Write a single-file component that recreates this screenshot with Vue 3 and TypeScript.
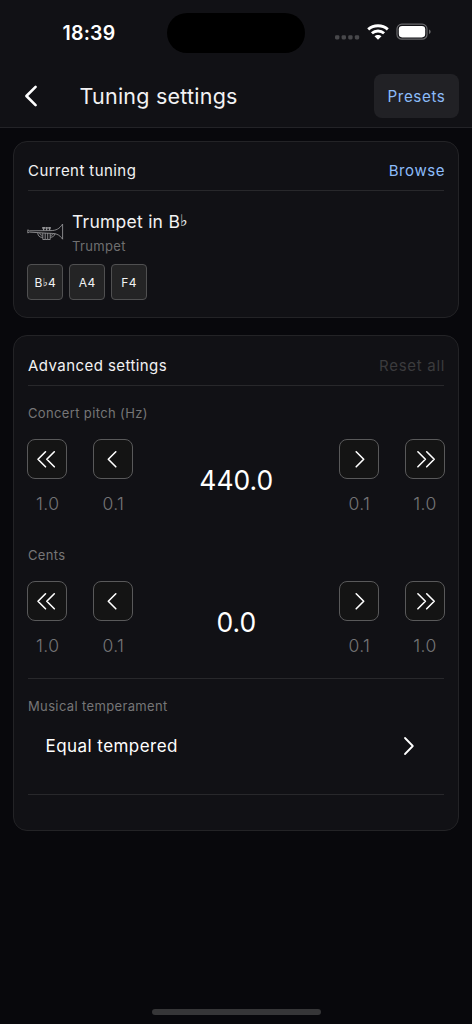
<script setup lang="ts">
interface Stepper {
  id: string
  label: string
  value: string
}

const notes: string[] = ['B♭4', 'A4', 'F4']

const steppers: Stepper[] = [
  { id: 'pitch', label: 'Concert pitch (Hz)', value: '440.0' },
  { id: 'cents', label: 'Cents', value: '0.0' },
]

const down = [
  { step: '1.0', path: 'M18.5 12.8 L11 20.3 L18.5 27.8 M27.3 12.8 L19.8 20.3 L27.3 27.8' },
  { step: '0.1', path: 'M22.8 12.8 L15.3 20.3 L22.8 27.8' },
]

const up = [
  { step: '0.1', path: 'M17.2 12.8 L24.7 20.3 L17.2 27.8' },
  { step: '1.0', path: 'M12.9 12.8 L20.4 20.3 L12.9 27.8 M21.7 12.8 L29.2 20.3 L21.7 27.8' },
]
</script>

<template>
  <div class="screen">
    <header class="top">
      <div class="status">
        <span class="clock">18:39</span>
        <span class="island"></span>
        <span class="indicators">
          <svg class="cell" width="26" height="20" viewBox="0 0 26 20">
            <g fill="#48484b">
              <rect x="1" y="12.2" width="4.4" height="4.2" rx="1.3" />
              <rect x="7.6" y="12.2" width="4.4" height="4.2" rx="1.3" />
              <rect x="14.2" y="12.2" width="4.4" height="4.2" rx="1.3" />
              <rect x="20.8" y="12.2" width="4.4" height="4.2" rx="1.3" />
            </g>
          </svg>
          <svg class="wifi" width="22" height="16" viewBox="0 0 22 16">
            <g fill="none" stroke="#fff" stroke-width="2.9">
              <path d="M1.2 5.4 C6.6 0.6 15.4 0.6 20.8 5.4" />
              <path d="M4.9 9.3 C8.3 6.2 13.7 6.2 17.1 9.3" />
            </g>
            <path d="M11 15.8 L7.5 12.2 C9.4 10.5 12.6 10.5 14.5 12.2 Z" fill="#fff" />
          </svg>
          <svg class="battery" width="36" height="18" viewBox="0 0 36 18">
            <rect x="1" y="1.2" width="30" height="15" rx="4.8" fill="none" stroke="#69696c" stroke-width="1.2" />
            <rect x="2.8" y="3" width="26.4" height="11.4" rx="3.3" fill="#fff" />
            <path d="M33 6.5 C35.2 7.3 35.2 10.1 33 10.9 Z" fill="#69696c" />
          </svg>
        </span>
      </div>
      <div class="bar">
        <svg class="back" width="20" height="28" viewBox="0 0 20 28">
          <path d="M15.6 4.8 L6.4 14 L15.6 23.2" fill="none" stroke="#fff" stroke-width="2.6" stroke-linecap="round" stroke-linejoin="round" />
        </svg>
        <h1 class="title">Tuning settings</h1>
        <button class="presets">Presets</button>
      </div>
    </header>

    <main class="content">
      <section class="card current">
        <div class="card-head">
          <h2 class="heading">Current tuning</h2>
          <a class="link">Browse</a>
        </div>
        <div class="instrument">
          <svg class="trumpet" width="37" height="18" viewBox="0 0 37 18">
            <g fill="none" stroke="#929294" stroke-width="0.9" stroke-linejoin="round">
              <path d="M0.8 6.8 V10 L2.4 9.1 L20 10.2 C29 10.3 32 11 35.6 16.2 V1 C32.4 6 29 7.5 24 7.6 L2.4 7.8 Z" />
              <path d="M10.7 9.8 C11 13 12.6 14.3 15 14.3 H15.8 M23.2 14.3 C26 14.3 27.5 13 28 10.5" />
              <path d="M12.7 10 C13 11.6 13.8 12.3 15.4 12.3 M23.4 12.3 C25.2 12.3 26 11.6 26.2 10.4" />
              <path d="M15.8 10 V16.5 H18.2 V10 M18.2 16.5 H20.7 V10 M20.7 16.5 H23.2 V10" />
              <path d="M15.2 4.8 H18 M18.4 4.8 H20.8 M21.2 4.8 H23.8" stroke-width="1.7" />
              <path d="M16.6 5 V7.5 M19.6 5 V7.5 M22.6 5 V7.5" stroke-width="1.3" />
            </g>
          </svg>
          <div class="names">
            <div class="name">Trumpet in B<span class="flat">♭</span></div>
            <div class="kind">Trumpet</div>
          </div>
        </div>
        <div class="chips">
          <span v-for="n in notes" :key="n" class="chip">
            <span v-if="n.includes('♭')">{{ n[0] }}<span class="flat">♭</span>{{ n[2] }}</span>
            <span v-else>{{ n }}</span>
          </span>
        </div>
      </section>

      <section class="card advanced">
        <div class="card-head">
          <h2 class="heading">Advanced settings</h2>
          <a class="link disabled">Reset all</a>
        </div>
        <div v-for="s in steppers" :key="s.id" class="stepper">
          <div class="label">{{ s.label }}</div>
          <div class="controls">
            <div class="side">
              <div v-for="b in down" :key="b.step" class="unit">
                <button class="step">
                  <svg width="40" height="40" viewBox="0 0 40 40"><path :d="b.path" /></svg>
                </button>
                <span class="amount">{{ b.step }}</span>
              </div>
            </div>
            <div class="value">{{ s.value }}</div>
            <div class="side">
              <div v-for="b in up" :key="b.step" class="unit">
                <button class="step">
                  <svg width="40" height="40" viewBox="0 0 40 40"><path :d="b.path" /></svg>
                </button>
                <span class="amount">{{ b.step }}</span>
              </div>
            </div>
          </div>
        </div>
        <div class="temperament">
          <div class="label">Musical temperament</div>
          <div class="option">
            <span>Equal tempered</span>
            <svg width="14" height="22" viewBox="0 0 14 22">
              <path d="M3 3 L10.8 11 L3 19" fill="none" stroke="#fff" stroke-width="1.8" stroke-linecap="round" stroke-linejoin="round" />
            </svg>
          </div>
        </div>
      </section>
    </main>
    <div class="home"><span></span></div>
  </div>
</template>

<style>
body {
  margin: 0;
  background: #08080c;
}
</style>

<style scoped>
* {
  box-sizing: border-box;
}
.screen {
  width: 472px;
  height: 1024px;
  display: flex;
  flex-direction: column;
  overflow: hidden;
  background: #08080c;
  color: #f2f2f3;
  font-family: Inter, 'Liberation Sans', sans-serif;
}
h1, h2 {
  margin: 0;
}
button {
  padding: 0;
  font-family: inherit;
}
.top {
  height: 128px;
  background: #111115;
  border-bottom: 1px solid #232327;
}
.status {
  height: 65px;
  display: grid;
  grid-template-columns: 167px 138px 167px;
  align-items: center;
}
.clock {
  padding-left: 62.5px;
  font-size: 19.5px;
  font-weight: 600;
  line-height: 24px;
  color: #fff;
  letter-spacing: 0.2px;
}
.island {
  height: 40px;
  border-radius: 20px;
  background: #000;
}
.indicators {
  display: flex;
  align-items: center;
  padding-left: 29px;
}
.cell {
  margin-top: 1px;
}
.wifi {
  margin-left: 7px;
  margin-top: -1px;
}
.battery {
  margin-left: 7px;
  margin-top: -1px;
}
.bar {
  height: 62px;
  display: flex;
  align-items: center;
  padding: 0 13.5px 0 20px;
}
.title {
  flex: 1;
  margin-left: 39.5px;
  font-size: 21.5px;
  font-weight: 400;
  line-height: 28px;
  letter-spacing: 0.23px;
  white-space: nowrap;
}
.presets {
  width: 85px;
  height: 44px;
  border: 0;
  border-radius: 8px;
  background: #212125;
  color: #8cbcfa;
  font-size: 15.2px;
  letter-spacing: 0.6px;
  padding-left: 1px;
}
.content {
  flex: 1;
  display: flex;
  flex-direction: column;
  gap: 18px;
  padding: 13px 13px 0;
}
.card {
  border: 1px solid #232326;
  border-radius: 14px;
  background: #111115;
  padding: 0 14px 0 13.5px;
}
.current {
  height: 177px;
}
.advanced {
  height: 496px;
  margin-top: -1px;
}
.card-head {
  height: 49px;
  display: flex;
  align-items: center;
  justify-content: space-between;
  padding-top: 9px;
  border-bottom: 1px solid #28282b;
}
.advanced .card-head {
  height: 50px;
  padding-top: 10px;
}
.heading,
.link {
  font-size: 15px;
  font-weight: 400;
  line-height: 20px;
  letter-spacing: 0.43px;
}
.heading {
  padding-left: 0.6px;
}
.link {
  margin-right: -1.2px;
  color: #8cbcfa;
  letter-spacing: 0.6px;
}
.link.disabled {
  color: #3b3b3d;
  letter-spacing: 0.72px;
}
.instrument {
  display: flex;
  height: 66px;
  padding-top: 19px;
}
.trumpet {
  margin-top: 13px;
  margin-left: -0.8px;
}
.names {
  margin-left: 8.3px;
}
.name {
  font-size: 17.5px;
  line-height: 24px;
  letter-spacing: 0.25px;
}
.kind {
  font-size: 13px;
  line-height: 18px;
  margin-top: 3px;
  letter-spacing: 0.35px;
  color: #6f6f70;
}
.flat {
  font-family: 'DejaVu Sans', sans-serif;
  font-size: 0.92em;
  font-weight: 700;
  line-height: 0;
  letter-spacing: 0;
  vertical-align: 0.1em;
}
.chips {
  display: flex;
  gap: 6px;
  margin-top: 7px;
  margin-left: -0.4px;
}
.chip {
  width: 35.8px;
  height: 36px;
  display: flex;
  align-items: center;
  justify-content: center;
  border: 1px solid #505051;
  border-radius: 4px;
  background: #242425;
  font-size: 12px;
  letter-spacing: 0.4px;
  padding-left: 0.8px;
}
.stepper {
  height: 142px;
}
.label {
  padding: 18px 0 0 0.5px;
  font-size: 13px;
  line-height: 18px;
  letter-spacing: 0.36px;
  color: #767677;
}
.controls {
  display: flex;
  justify-content: space-between;
  margin: 17px -0.6px 0 -0.2px;
}
.side {
  display: flex;
  gap: 25.6px;
}
.unit {
  display: flex;
  flex-direction: column;
  align-items: center;
  width: 40px;
}
.step {
  width: 40px;
  height: 40px;
  display: flex;
  align-items: center;
  justify-content: center;
  border: 1px solid #59595a;
  border-radius: 8px;
  background: #141414;
}
.step svg {
  flex: none;
}
.step path {
  fill: none;
  stroke: #fff;
  stroke-width: 1.6;
  stroke-linecap: round;
  stroke-linejoin: round;
}
.amount {
  margin-top: 13px;
  padding-left: 0.9px;
  font-size: 17.5px;
  font-weight: 300;
  line-height: 24px;
  letter-spacing: 0.4px;
  color: #747475;
}
.value {
  margin-top: 24.5px;
  padding-left: 0.6px;
  font-size: 26.5px;
  line-height: 32px;
  color: #fff;
}
.temperament {
  height: 117px;
  margin-top: 8px;
  border-top: 1px solid #28282b;
  border-bottom: 1px solid #28282b;
}
.option {
  display: flex;
  align-items: center;
  justify-content: space-between;
  margin-top: 18px;
  padding: 0 28px 0 18px;
  font-size: 17px;
  line-height: 26px;
  letter-spacing: 0.45px;
  color: #fff;
}
.home {
  height: 17px;
  display: flex;
  justify-content: center;
}
.home span {
  width: 169px;
  height: 6px;
  margin-top: 2px;
  border-radius: 3px;
  background: #363638;
}
</style>
